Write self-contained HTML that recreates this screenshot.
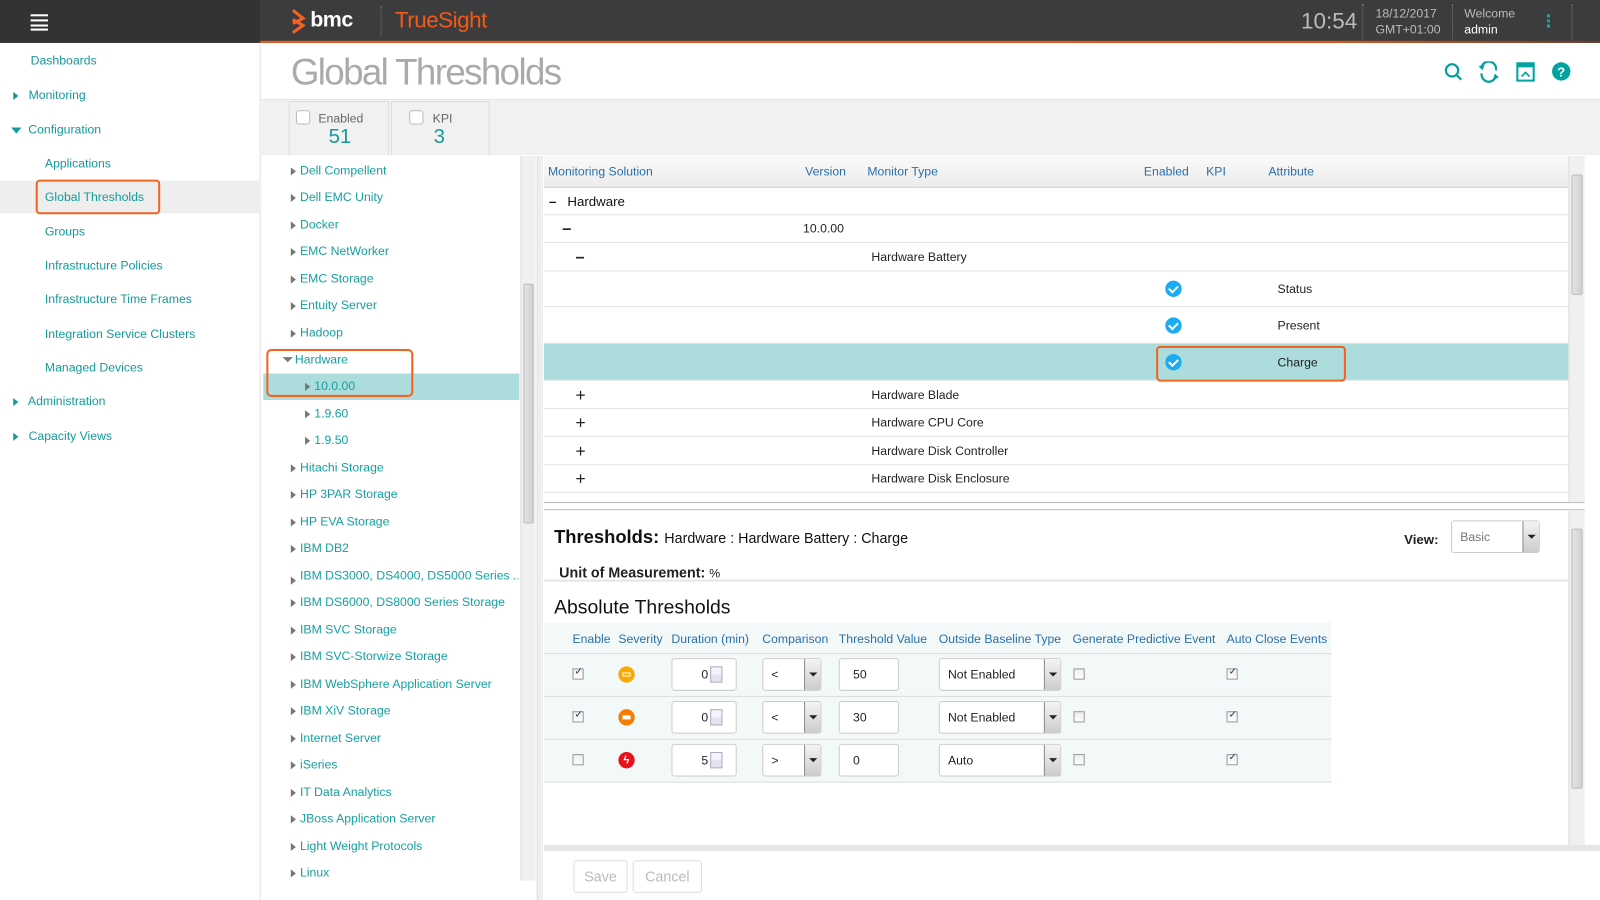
<!DOCTYPE html>
<html><head><meta charset="utf-8"><style>
*{box-sizing:border-box;margin:0;padding:0}
html,body{width:1600px;height:900px;overflow:hidden;background:#fff}
#w{position:absolute;left:0;top:0;width:1568px;height:882px;transform:scale(1.020408);transform-origin:0 0;font-family:"Liberation Sans",sans-serif;font-size:12px;color:#222}
.a{position:absolute}
.sb{position:absolute;left:0;width:255px;font-size:12px;color:#16999a}
.tri{display:inline-block;width:0;height:0;border-top:4px solid transparent;border-bottom:4px solid transparent;border-left:5px solid #777;vertical-align:middle}
.tree div{position:absolute;font-size:12px;color:#17a0a0;white-space:nowrap}
.tree .tri{position:absolute;left:-9px;top:4px}
.row{position:absolute;left:533px;width:1004px;border-bottom:1px solid #e2e2e2}
.hd{color:#2a6fa8;font-size:12px}
.chk{position:absolute;width:16px;height:16px;border-radius:50%;background:#1aabf0}
.chk:after{content:"";position:absolute;left:5px;top:3px;width:4px;height:7px;border:solid #fff;border-width:0 2px 2px 0;transform:rotate(45deg)}
.cb{position:absolute;width:11px;height:11px;border:1px solid #999;background:linear-gradient(#eee,#fff)}
.cb.on:after{content:"✓";position:absolute;left:1px;top:-3px;font-size:10px;color:#335}
.inp{position:absolute;height:32px;border:1px solid #ccc;border-radius:3px;background:#fff;font-size:12px;line-height:30px;padding-left:8px}
.dd{position:absolute;right:0;top:0;width:16px;height:30px;border-left:1px solid #888;background:linear-gradient(#f4f4f4,#ccc)}
.dd:after{content:"";position:absolute;left:4px;top:13px;border-left:4px solid transparent;border-right:4px solid transparent;border-top:4px solid #222}
.sc{position:absolute;background:#f0f0f0;border-left:1px solid #ddd}
.thumb{position:absolute;left:2px;right:2px;background:linear-gradient(90deg,#e4e4e4,#d0d0d0);border:1px solid #bbb;border-radius:2px}
.dur{position:absolute;width:64px;height:32px;border:1px solid #ccc;border-radius:3px;background:#fff;font-size:12px;line-height:30px}
.dur span{position:absolute;right:27px;top:0}
.dur i{position:absolute;left:37px;top:7px;width:12px;height:16px;border:1px solid #aab;background:linear-gradient(#f4f4ff 50%,#e4e4f0 50%)}
</style></head><body><div id="w">

<div class="a" style="left:0;top:0;width:1568px;height:42px;background:#3c3c3e"></div>
<div class="a" style="left:0;top:0;width:255px;height:42px;background:#333"></div>
<div class="a" style="left:255px;top:40px;width:1313px;height:2px;background:linear-gradient(90deg,#f25a14,#e8540c 80%,#6a3a2a)"></div>
<div class="a" style="left:30px;top:14px;width:17px;height:2px;background:#fff;box-shadow:0 5px 0 #fff,0 10px 0 #fff,0 14px 0 #fff"></div>
<svg class="a" style="left:284px;top:8px" width="18" height="26" viewBox="0 0 18 26"><path d="M3 2 L13 10 L3 15 M3 11 L13 17 L3 24" fill="none" stroke="#f26322" stroke-width="3"/></svg>
<div class="a" style="left:304px;top:8px;font-size:21px;font-weight:bold;color:#fff;letter-spacing:-0.5px">bmc</div>
<div class="a" style="left:373px;top:6px;height:30px;border-left:1px dotted #777"></div>
<div class="a" style="left:387px;top:7px;font-size:22px;color:#f25a14;letter-spacing:-0.5px">TrueSight</div>
<div class="a" style="left:1275px;top:8px;font-size:22px;color:#bbb">10:54</div>
<div class="a" style="left:1335px;top:4px;height:34px;border-left:1px dotted #777"></div>
<div class="a" style="left:1348px;top:5px;font-size:12px;color:#bbb;line-height:16px">18/12/2017<br>GMT+01:00</div>
<div class="a" style="left:1423px;top:4px;height:34px;border-left:1px dotted #777"></div>
<div class="a" style="left:1435px;top:5px;font-size:12px;color:#bbb;line-height:16px">Welcome<br><span style="color:#fff">admin</span></div>
<div class="a" style="left:1516px;top:14px;width:3px;height:3px;background:#16a6a0;box-shadow:0 5px 0 #16a6a0,0 10px 0 #16a6a0"></div>
<div class="a" style="left:1540px;top:4px;height:34px;border-left:1px dotted #777"></div>

<div class="a" style="left:254px;top:42px;width:2px;height:840px;background:#eee"></div>
<div class="a" style="left:0;top:177px;width:254px;height:32px;background:#eee"></div>
<div class="a" style="left:35px;top:176px;width:122px;height:34px;border:2px solid #f26322;border-radius:4px"></div>
<div class="sb" style="left:30px;top:52px">Dashboards</div>
<div class="sb" style="left:13px;top:86px"><span class="tri" style="border-left-color:#16999a"></span>&nbsp;&nbsp; Monitoring</div>
<div class="sb" style="left:11px;top:120px"><span style="display:inline-block;border-left:5px solid transparent;border-right:5px solid transparent;border-top:6px solid #16999a;vertical-align:middle"></span>&nbsp; Configuration</div>
<div class="sb" style="left:44px;top:153px">Applications</div>
<div class="sb" style="left:44px;top:186px">Global Thresholds</div>
<div class="sb" style="left:44px;top:220px">Groups</div>
<div class="sb" style="left:44px;top:253px">Infrastructure Policies</div>
<div class="sb" style="left:44px;top:286px">Infrastructure Time Frames</div>
<div class="sb" style="left:44px;top:320px">Integration Service Clusters</div>
<div class="sb" style="left:44px;top:353px">Managed Devices</div>
<div class="sb" style="left:13px;top:386px"><span class="tri" style="border-left-color:#16999a"></span>&nbsp;&nbsp; Administration</div>
<div class="sb" style="left:13px;top:420px"><span class="tri" style="border-left-color:#16999a"></span>&nbsp;&nbsp; Capacity Views</div>

<div class="a" style="left:285px;top:50px;font-size:36px;color:#aaa;letter-spacing:-1.6px">Global Thresholds</div>
<svg class="a" style="left:1414px;top:60px" width="130" height="22" viewBox="0 0 130 22">
<g fill="none" stroke="#00a3a0" stroke-width="2.2"><circle cx="9" cy="9" r="6"/><path d="M13 13 L18 18"/>
<path d="M38 6 A7 7 0 0 1 52 9"/><path d="M52 14 A7 7 0 0 1 38 12"/></g>
<path d="M35 5 L41 3 L39 9Z M55 16 L49 18 L51 12Z" fill="#00a3a0"/>
<rect x="73" y="2" width="16" height="17" fill="none" stroke="#00a3a0" stroke-width="2"/><rect x="73" y="2" width="16" height="4" fill="#00a3a0"/><path d="M77 15 L81 11 L85 15" fill="none" stroke="#00a3a0" stroke-width="1.6"/>
<circle cx="116" cy="10" r="9" fill="#00a3a0"/><text x="116" y="15" font-size="13" font-weight="bold" fill="#fff" text-anchor="middle" font-family="Liberation Sans">?</text></svg>

<div class="a" style="left:256px;top:97px;width:1312px;height:55px;background:#f1f1f1;border-top:1px solid #e4e4e4"></div>
<div class="a" style="left:283px;top:99px;width:98px;height:53px;background:#f1f1f1;border:1px solid #ddd;border-bottom:none"></div>
<div class="a" style="left:383px;top:99px;width:97px;height:53px;background:#f1f1f1;border:1px solid #ddd;border-bottom:none"></div>
<div class="a" style="left:290px;top:108px;width:14px;height:14px;border:1px solid #bbb;border-radius:3px;background:#fff"></div>
<div class="a" style="left:312px;top:109px;font-size:12px;color:#666">Enabled</div>
<div class="a" style="left:322px;top:123px;font-size:20px;color:#16999a">51</div>
<div class="a" style="left:401px;top:108px;width:14px;height:14px;border:1px solid #bbb;border-radius:3px;background:#fff"></div>
<div class="a" style="left:424px;top:109px;font-size:12px;color:#666">KPI</div>
<div class="a" style="left:425px;top:123px;font-size:20px;color:#16999a">3</div>

<div class="a" style="left:258px;top:366px;width:251px;height:26px;background:#acdcdc"></div>
<div class="a" style="left:261px;top:342px;width:144px;height:47px;border:2px solid #f26322;border-radius:5px"></div>
<div class="tree">
<div style="left:294px;top:160px"><span class="tri"></span>Dell Compellent</div>
<div style="left:294px;top:186px"><span class="tri"></span>Dell EMC Unity</div>
<div style="left:294px;top:213px"><span class="tri"></span>Docker</div>
<div style="left:294px;top:239px"><span class="tri"></span>EMC NetWorker</div>
<div style="left:294px;top:266px"><span class="tri"></span>EMC Storage</div>
<div style="left:294px;top:292px"><span class="tri"></span>Entuity Server</div>
<div style="left:294px;top:319px"><span class="tri"></span>Hadoop</div>
<div style="left:289px;top:345px"><span style="position:absolute;left:-12px;top:5px;border-left:5px solid transparent;border-right:5px solid transparent;border-top:5px solid #777"></span>Hardware</div>
<div style="left:308px;top:371px"><span class="tri"></span>10.0.00</div>
<div style="left:308px;top:398px"><span class="tri"></span>1.9.60</div>
<div style="left:308px;top:424px"><span class="tri"></span>1.9.50</div>
<div style="left:294px;top:451px"><span class="tri"></span>Hitachi Storage</div>
<div style="left:294px;top:477px"><span class="tri"></span>HP 3PAR Storage</div>
<div style="left:294px;top:504px"><span class="tri"></span>HP EVA Storage</div>
<div style="left:294px;top:530px"><span class="tri"></span>IBM DB2</div>
<div style="left:294px;top:557px;width:214px;overflow:hidden">IBM DS3000, DS4000, DS5000 Series ...</div>
<div style="left:294px;top:583px"><span class="tri"></span>IBM DS6000, DS8000 Series Storage</div>
<div style="left:294px;top:610px"><span class="tri"></span>IBM SVC Storage</div>
<div style="left:294px;top:636px"><span class="tri"></span>IBM SVC-Storwize Storage</div>
<div style="left:294px;top:663px"><span class="tri"></span>IBM WebSphere Application Server</div>
<div style="left:294px;top:689px"><span class="tri"></span>IBM XiV Storage</div>
<div style="left:294px;top:716px"><span class="tri"></span>Internet Server</div>
<div style="left:294px;top:742px"><span class="tri"></span>iSeries</div>
<div style="left:294px;top:769px"><span class="tri"></span>IT Data Analytics</div>
<div style="left:294px;top:795px"><span class="tri"></span>JBoss Application Server</div>
<div style="left:294px;top:822px"><span class="tri"></span>Light Weight Protocols</div>
<div style="left:294px;top:848px"><span class="tri"></span>Linux</div>
</div>
<div class="a" style="left:285px;top:565px;width:0;height:0;border-top:4px solid transparent;border-bottom:4px solid transparent;border-left:5px solid #777"></div>
<div class="sc" style="left:510px;top:153px;width:15px;height:710px"><div class="thumb" style="top:125px;height:235px"></div></div>
<div class="a" style="left:526px;top:153px;width:6px;height:729px;background:#eee;border-left:1px solid #ddd"></div>

<div class="a" style="left:533px;top:153px;width:1004px;height:31px;background:linear-gradient(#fafafa,#ececec);border-bottom:1px solid #ccc"></div>
<div class="a hd" style="left:537px;top:161px">Monitoring Solution</div>
<div class="a hd" style="left:789px;top:161px">Version</div>
<div class="a hd" style="left:850px;top:161px">Monitor Type</div>
<div class="a hd" style="left:1121px;top:161px">Enabled</div>
<div class="a hd" style="left:1182px;top:161px">KPI</div>
<div class="a hd" style="left:1243px;top:161px">Attribute</div>
<div class="row" style="top:184px;height:27px"></div>
<div class="row" style="top:211px;height:27px"></div>
<div class="row" style="top:238px;height:28px"></div>
<div class="row" style="top:266px;height:35px"></div>
<div class="row" style="top:301px;height:36px"></div>
<div class="row" style="top:337px;height:36px;background:#acdcdc"></div>
<div class="row" style="top:373px;height:28px"></div>
<div class="row" style="top:401px;height:27px"></div>
<div class="row" style="top:428px;height:28px"></div>
<div class="row" style="top:456px;height:27px"></div>
<div class="a" style="left:538px;top:190px;font-size:13px;color:#111"><b>–</b>&nbsp;&nbsp; Hardware</div>
<div class="a" style="left:551px;top:216px;font-size:16px;font-weight:bold">–</div>
<div class="a" style="left:787px;top:217px">10.0.00</div>
<div class="a" style="left:564px;top:244px;font-size:16px;font-weight:bold">–</div>
<div class="a" style="left:854px;top:245px">Hardware Battery</div>
<div class="chk" style="left:1142px;top:275px"></div><div class="a" style="left:1252px;top:276px">Status</div>
<div class="chk" style="left:1142px;top:311px"></div><div class="a" style="left:1252px;top:312px">Present</div>
<div class="chk" style="left:1142px;top:347px"></div><div class="a" style="left:1252px;top:348px">Charge</div>
<div class="a" style="left:1133px;top:339px;width:186px;height:35px;border:2px solid #f26322;border-radius:4px"></div>
<div class="a" style="left:564px;top:378px;font-size:17px">+</div><div class="a" style="left:854px;top:380px">Hardware Blade</div>
<div class="a" style="left:564px;top:405px;font-size:17px">+</div><div class="a" style="left:854px;top:407px">Hardware CPU Core</div>
<div class="a" style="left:564px;top:433px;font-size:17px">+</div><div class="a" style="left:854px;top:435px">Hardware Disk Controller</div>
<div class="a" style="left:564px;top:460px;font-size:17px">+</div><div class="a" style="left:854px;top:462px">Hardware Disk Enclosure</div>
<div class="sc" style="left:1537px;top:153px;width:16px;height:339px"><div class="thumb" style="top:18px;height:118px"></div></div>
<div class="a" style="left:533px;top:483px;width:1004px;height:9px;background:#fff;overflow:hidden"></div>
<div class="a" style="left:533px;top:492px;width:1020px;height:8px;background:#fff;border-top:1px solid #bbb;border-bottom:1px solid #bbb"></div>

<div class="a" style="left:543px;top:516px;font-size:18px;font-weight:bold;color:#111">Thresholds: <span style="font-size:14px;font-weight:normal">Hardware : Hardware Battery : Charge</span></div>
<div class="a" style="left:1376px;top:521px;font-size:13px;font-weight:bold">View:</div>
<div class="inp" style="left:1422px;top:510px;width:87px;color:#777">Basic<div class="dd"></div></div>
<div class="a" style="left:548px;top:553px;font-size:14px;font-weight:bold">Unit of Measurement: <span style="font-size:12px;font-weight:normal">%</span></div>
<div class="a" style="left:533px;top:568px;width:1004px;height:2px;background:#e6e6e6"></div>
<div class="a" style="left:543px;top:585px;font-size:19px;color:#111">Absolute Thresholds</div>
<div class="a" style="left:533px;top:610px;width:772px;height:156px;background:#f3f9f9"></div>
<div class="a" style="left:533px;top:640px;width:772px;border-top:1px solid #ddd"></div>
<div class="a" style="left:533px;top:682px;width:772px;border-top:1px solid #ddd"></div>
<div class="a" style="left:533px;top:724px;width:772px;border-top:1px solid #ddd"></div>
<div class="a" style="left:533px;top:766px;width:772px;border-top:1px solid #ddd"></div>
<div class="a hd" style="left:561px;top:619px">Enable</div>
<div class="a hd" style="left:606px;top:619px">Severity</div>
<div class="a hd" style="left:658px;top:619px">Duration (min)</div>
<div class="a hd" style="left:747px;top:619px">Comparison</div>
<div class="a hd" style="left:822px;top:619px">Threshold Value</div>
<div class="a hd" style="left:920px;top:619px">Outside Baseline Type</div>
<div class="a hd" style="left:1051px;top:619px">Generate Predictive Event</div>
<div class="a hd" style="left:1202px;top:619px">Auto Close Events</div>

<div class="cb on" style="left:561px;top:655px"></div>
<div class="a" style="left:606px;top:653px;width:16px;height:16px;border-radius:50%;background:#f8aa00"><div style="position:absolute;left:4px;top:6px;width:8px;height:4px;border:1px solid #fff"></div></div>
<div class="dur" style="left:658px;top:645px"><span>0</span><i></i></div>
<div class="inp" style="left:747px;top:645px;width:58px">&lt;<div class="dd"></div></div>
<div class="inp" style="left:822px;top:645px;width:59px;padding-left:13px">50</div>
<div class="inp" style="left:920px;top:645px;width:120px">Not Enabled<div class="dd"></div></div>
<div class="cb" style="left:1052px;top:655px"></div>
<div class="cb on" style="left:1202px;top:655px"></div>

<div class="cb on" style="left:561px;top:697px"></div>
<div class="a" style="left:606px;top:695px;width:16px;height:16px;border-radius:50%;background:#f57c00"><div style="position:absolute;left:4px;top:6px;width:8px;height:4px;background:#fff"></div></div>
<div class="dur" style="left:658px;top:687px"><span>0</span><i></i></div>
<div class="inp" style="left:747px;top:687px;width:58px">&lt;<div class="dd"></div></div>
<div class="inp" style="left:822px;top:687px;width:59px;padding-left:13px">30</div>
<div class="inp" style="left:920px;top:687px;width:120px">Not Enabled<div class="dd"></div></div>
<div class="cb" style="left:1052px;top:697px"></div>
<div class="cb on" style="left:1202px;top:697px"></div>

<div class="cb" style="left:561px;top:739px"></div>
<div class="a" style="left:606px;top:737px;width:16px;height:16px;border-radius:50%;background:#e8141c;color:#fff;font-size:11px;text-align:center;line-height:16px;font-weight:bold">ϟ</div>
<div class="dur" style="left:658px;top:729px"><span>5</span><i></i></div>
<div class="inp" style="left:747px;top:729px;width:58px">&gt;<div class="dd"></div></div>
<div class="inp" style="left:822px;top:729px;width:59px;padding-left:13px">0</div>
<div class="inp" style="left:920px;top:729px;width:120px">Auto<div class="dd"></div></div>
<div class="cb" style="left:1052px;top:739px"></div>
<div class="cb on" style="left:1202px;top:739px"></div>

<div class="sc" style="left:1537px;top:500px;width:16px;height:332px"><div class="thumb" style="top:18px;height:255px"></div></div>
<div class="a" style="left:533px;top:828px;width:1035px;height:6px;background:#e6e6e6"></div>

<div class="a" style="left:562px;top:843px;width:53px;height:32px;border:1px solid #ddd;border-radius:3px;color:#bbb;font-size:14px;text-align:center;line-height:30px">Save</div>
<div class="a" style="left:620px;top:843px;width:68px;height:32px;border:1px solid #ddd;border-radius:3px;color:#bbb;font-size:14px;text-align:center;line-height:30px">Cancel</div>
</div></body></html>
